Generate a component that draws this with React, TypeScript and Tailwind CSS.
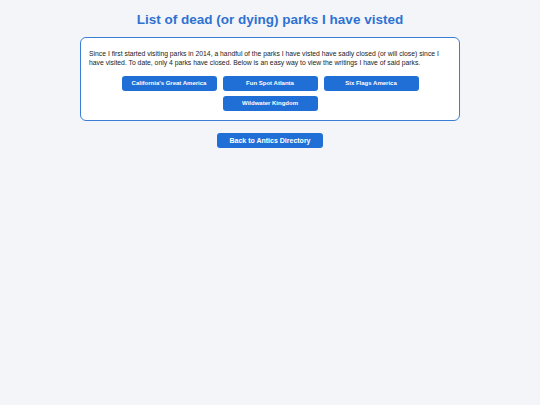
import React from 'react';

const parks = ["California's Great America", 'Fun Spot Atlanta', 'Six Flags America', 'Wildwater Kingdom'];

function App() {
  return (
    <main className="min-h-[405px] bg-[#f4f5f8] font-['Liberation_Sans',Arial,sans-serif] flex flex-col items-center">
      <h1 className="mt-[12px] text-[13.5px] leading-[16px] font-bold text-[#2d72d2]">
        List of dead (or dying) parks I have visted
      </h1>
      <section className="mt-[9px] w-[380px] h-[84px] bg-white border border-[#3b7ed6] rounded-[6px] px-[8px] pt-[11px]">
        <p className="text-[6.8px] leading-[9px] text-[#222]">
          Since I first started visiting parks in 2014, a handful of the parks I have visted have sadly closed (or will close) since I have visited. To date, only 4 parks have closed. Below is an easy way to view the writings I have of said parks.
        </p>
        <div className="mt-[9px] flex flex-wrap justify-center gap-x-[6px] gap-y-[5px] px-[32px]">
          {parks.map(p => (
            <button key={p} className="w-[95px] h-[15px] rounded-[3px] bg-[#1f6fd6] text-white text-[6px] font-bold leading-[15px]">
              {p}
            </button>
          ))}
        </div>
      </section>
      <button className="mt-[12px] w-[106px] h-[15px] rounded-[3px] bg-[#1f6fd6] text-white text-[7px] font-bold leading-[15px]">
        Back to Antics Directory
      </button>
    </main>
  );
}

export default App;
